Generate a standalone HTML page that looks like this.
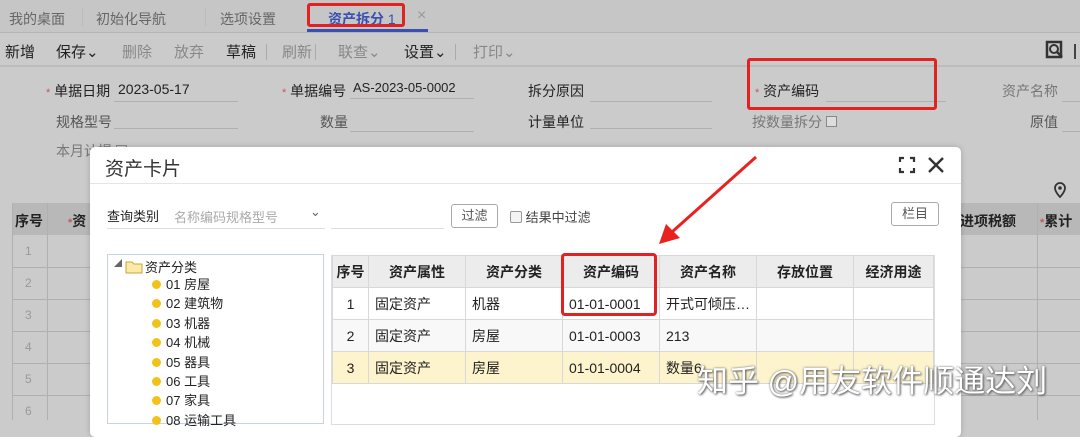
<!DOCTYPE html>
<html><head><meta charset="utf-8"><style>
*{margin:0;padding:0;box-sizing:border-box}
body{width:1080px;height:420px;overflow:hidden;background:#cbcbcb;font-family:"Liberation Sans","Noto Sans CJK SC",sans-serif;font-size:14px;color:#222;position:relative}
.a{position:absolute;white-space:nowrap}
.g{color:#888}
.ln{position:absolute;height:1px;background:#b0b0b0}
.req{color:#c55;font-size:11px}
table{border-collapse:collapse;position:absolute}
td{border:1px solid #d8d8d8;font-size:14px;padding-left:6px;height:32px}
.th td{background:#ececec;font-weight:bold;text-align:center;padding:0;height:32px}
</style></head><body>
<!-- tabs -->
<div class="a" style="left:0;top:0;width:1080px;height:33px;background:#c6c6c6;border-bottom:1px solid #b5b5b5"></div>
<div class="a g" style="left:9px;top:9px;color:#666">我的桌面</div>
<div class="a" style="left:82px;top:8px;width:1px;height:18px;background:#bbb"></div>
<div class="a" style="left:96px;top:9px;color:#666">初始化导航</div>
<div class="a" style="left:205px;top:8px;width:1px;height:18px;background:#bbb"></div>
<div class="a" style="left:220px;top:9px;color:#666">选项设置</div>
<div class="a" style="left:328px;top:9px;color:#3b4fb0;font-weight:bold">资产拆分 <span style="font-weight:normal">1</span></div>
<div class="a" style="left:417px;top:7px;color:#999;font-size:16px">×</div>
<div class="a" style="left:307px;top:29px;width:121px;height:3px;background:#3b4fb0"></div>
<div class="a" style="left:307px;top:3px;width:98px;height:24px;border:3px solid #e02222;border-radius:3px"></div>
<!-- toolbar -->
<div class="a" style="left:0;top:33px;width:1080px;height:34px;background:#cbcbcb;border-bottom:2px solid #bcbcbc"></div>
<div class="a" style="left:5px;top:41px;font-size:15px">新增</div>
<div class="a" style="left:56px;top:41px;font-size:15px">保存⌄</div>
<div class="a" style="left:122px;top:41px;font-size:15px;color:#888">删除</div>
<div class="a" style="left:174px;top:41px;font-size:15px;color:#888">放弃</div>
<div class="a" style="left:226px;top:41px;font-size:15px">草稿</div>
<div class="a" style="left:282px;top:41px;font-size:15px;color:#888">刷新</div>
<div class="a" style="left:338px;top:41px;font-size:15px;color:#888">联查⌄</div>
<div class="a" style="left:404px;top:41px;font-size:15px">设置⌄</div>
<div class="a" style="left:473px;top:41px;font-size:15px;color:#888">打印⌄</div>
<div class="a" style="left:266px;top:44px;width:1px;height:16px;background:#aaa"></div>
<div class="a" style="left:315px;top:44px;width:1px;height:16px;background:#aaa"></div>
<div class="a" style="left:455px;top:44px;width:1px;height:16px;background:#aaa"></div>
<svg class="a" style="left:1045px;top:40px" width="20" height="20"><rect x="2" y="2" width="14" height="15" fill="none" stroke="#333" stroke-width="2.5"/><circle cx="9" cy="9" r="4" fill="none" stroke="#333" stroke-width="2"/><line x1="12" y1="12" x2="17" y2="17" stroke="#333" stroke-width="2.5"/></svg>
<div class="a" style="left:1074px;top:44px;width:2px;height:15px;background:#444"></div>
<!-- form -->
<div class="a" style="left:46px;top:81px"><span class="req">*</span> 单据日期</div>
<div class="a" style="left:118px;top:81px">2023-05-17</div><div class="ln" style="left:114px;top:101px;width:124px"></div>
<div class="a" style="left:282px;top:81px"><span class="req">*</span> 单据编号</div>
<div class="a" style="left:353px;top:80px;font-size:13px">AS-2023-05-0002</div><div class="ln" style="left:350px;top:98px;width:124px"></div>
<div class="a" style="left:528px;top:81px">拆分原因</div><div class="ln" style="left:590px;top:101px;width:122px"></div>
<div class="a" style="left:755px;top:81px"><span class="req">*</span> 资产编码</div><div class="ln" style="left:826px;top:101px;width:120px"></div>
<div class="a" style="left:1002px;top:81px;color:#777">资产名称</div><div class="ln" style="left:1062px;top:101px;width:18px"></div>
<div class="a" style="left:56px;top:112px;color:#555">规格型号</div><div class="ln" style="left:114px;top:128px;width:124px"></div>
<div class="a" style="left:320px;top:112px;color:#555">数量</div><div class="ln" style="left:350px;top:131px;width:124px"></div>
<div class="a" style="left:528px;top:112px">计量单位</div><div class="ln" style="left:590px;top:128px;width:122px"></div>
<div class="a" style="left:752px;top:112px;color:#777">按数量拆分 <span style="display:inline-block;width:11px;height:11px;border:1px solid #888;background:#ddd"></span></div>
<div class="a" style="left:1030px;top:112px;color:#555">原值</div><div class="ln" style="left:1062px;top:131px;width:18px"></div>
<div class="a" style="left:56px;top:141px;color:#777">本月计提 <span style="display:inline-block;width:11px;height:11px;border:1px solid #888"></span></div>
<div class="a" style="left:747px;top:58px;width:190px;height:52px;border:3px solid #e02222;border-radius:3px"></div>
<svg class="a" style="left:1050px;top:180px" width="20" height="20"><path d="M10 3a5 5 0 0 0-5 5c0 4 5 9 5 9s5-5 5-9a5 5 0 0 0-5-5z" fill="none" stroke="#333" stroke-width="1.8"/><circle cx="10" cy="8" r="1.8" fill="#333"/></svg>
<!-- background grid -->
<div class="a" style="left:12px;top:203px;width:1068px;height:32px;background:#b8b8b8"></div>
<div class="a" style="left:15px;top:211px;font-weight:bold">序号</div>
<div class="a" style="left:68px;top:211px;font-weight:bold"><span class="req">*</span>资</div>
<div class="a" style="left:960px;top:211px;font-weight:bold">进项税额</div>
<div class="a" style="left:1040px;top:211px;font-weight:bold"><span class="req">*</span>累计</div>
<div class="a" style="left:47px;top:203px;width:1px;height:217px;background:#b0b0b0"></div>
<div class="a" style="left:1037px;top:203px;width:1px;height:217px;background:#b0b0b0"></div>
<div class="a" style="left:12px;top:203px;width:1px;height:217px;background:#b0b0b0"></div>
<div class="ln" style="left:12px;top:267px;width:1068px"></div>
<div class="ln" style="left:12px;top:299px;width:1068px"></div>
<div class="ln" style="left:12px;top:331px;width:1068px"></div>
<div class="ln" style="left:12px;top:363px;width:1068px"></div>
<div class="ln" style="left:12px;top:395px;width:1068px"></div>
<div class="a" style="left:25px;top:244px;color:#999;font-size:12px">1</div>
<div class="a" style="left:25px;top:276px;color:#999;font-size:12px">2</div>
<div class="a" style="left:25px;top:308px;color:#999;font-size:12px">3</div>
<div class="a" style="left:25px;top:340px;color:#999;font-size:12px">4</div>
<div class="a" style="left:25px;top:372px;color:#999;font-size:12px">5</div>
<div class="a" style="left:25px;top:404px;color:#999;font-size:12px">6</div>
<!-- modal -->
<div class="a" style="left:90px;top:147px;width:871px;height:290px;background:#fff;border-radius:5px;box-shadow:0 0 6px rgba(0,0,0,.2)"></div>
<div class="a" style="left:105px;top:154px;font-size:19px;color:#333">资产卡片</div>
<div class="ln" style="left:90px;top:183px;width:871px;background:#e5e5e5"></div>
<svg class="a" style="left:898px;top:156px" width="18" height="18"><path d="M2 6V2h4M12 2h4v4M16 12v4h-4M6 16H2v-4" fill="none" stroke="#333" stroke-width="2.2"/></svg>
<svg class="a" style="left:927px;top:156px" width="18" height="18"><path d="M2 2L16 16M16 2L2 16" stroke="#333" stroke-width="2.4"/></svg>
<div class="a" style="left:107px;top:206px;font-size:13px">查询类别</div>
<div class="a" style="left:174px;top:207px;font-size:13px;color:#aaa">名称编码规格型号</div>
<div class="a" style="left:310px;top:204px;font-size:13px;color:#666">⌄</div>
<div class="ln" style="left:107px;top:228px;width:218px;background:#ddd"></div>
<div class="ln" style="left:331px;top:228px;width:113px;background:#ddd"></div>
<div class="a" style="left:451px;top:204px;width:47px;height:24px;border:1px solid #aaa;border-radius:3px;font-size:13px;color:#555;text-align:center;line-height:22px">过滤</div>
<div class="a" style="left:510px;top:207px;font-size:13px;color:#444"><span style="display:inline-block;width:12px;height:12px;border:1px solid #999;border-radius:2px;background:#f4f4f4;vertical-align:-1px"></span> 结果中过滤</div>
<div class="a" style="left:891px;top:202px;width:48px;height:24px;border:1px solid #aaa;border-radius:3px;font-size:13px;color:#555;text-align:center;line-height:22px">栏目</div>
<!-- tree -->
<div class="a" style="left:107px;top:254px;width:217px;height:170px;border:1px solid #c8d4e0"></div>
<div class="a" style="left:114px;top:258px;font-size:8px;color:#666">◢</div>
<svg class="a" style="left:125px;top:260px" width="18" height="14"><path d="M1 2h6l2 2h8v9H1z" fill="#fbe9a6" stroke="#c9a53a"/></svg>
<div class="a" style="left:145px;top:257px;font-size:13px">资产分类</div>
<div class="a" style="left:152px;top:275px;font-size:13px;line-height:19.4px">
<div><span style="display:inline-block;width:9px;height:9px;border-radius:50%;background:#f2c21b;margin-right:5px"></span>01 房屋</div>
<div><span style="display:inline-block;width:9px;height:9px;border-radius:50%;background:#f2c21b;margin-right:5px"></span>02 建筑物</div>
<div><span style="display:inline-block;width:9px;height:9px;border-radius:50%;background:#f2c21b;margin-right:5px"></span>03 机器</div>
<div><span style="display:inline-block;width:9px;height:9px;border-radius:50%;background:#f2c21b;margin-right:5px"></span>04 机械</div>
<div><span style="display:inline-block;width:9px;height:9px;border-radius:50%;background:#f2c21b;margin-right:5px"></span>05 器具</div>
<div><span style="display:inline-block;width:9px;height:9px;border-radius:50%;background:#f2c21b;margin-right:5px"></span>06 工具</div>
<div><span style="display:inline-block;width:9px;height:9px;border-radius:50%;background:#f2c21b;margin-right:5px"></span>07 家具</div>
<div><span style="display:inline-block;width:9px;height:9px;border-radius:50%;background:#f2c21b;margin-right:5px"></span>08 运输工具</div>
</div>
<!-- table -->
<div class="a" style="left:331px;top:255px;width:604px;height:170px;border:1px solid #ddd"></div>
<table style="left:332px;top:255px;width:602px">
<tr class="th"><td style="width:36px">序号</td><td style="width:97px">资产属性</td><td style="width:97px">资产分类</td><td style="width:97px">资产编码</td><td style="width:97px">资产名称</td><td style="width:97px">存放位置</td><td>经济用途</td></tr>
<tr><td style="text-align:center;padding:0">1</td><td>固定资产</td><td>机器</td><td>01-01-0001</td><td>开式可倾压…</td><td></td><td></td></tr>
<tr style="background:#f8f8f8"><td style="text-align:center;padding:0">2</td><td>固定资产</td><td>房屋</td><td>01-01-0003</td><td>213</td><td></td><td></td></tr>
<tr style="background:#fdf3cc"><td style="text-align:center;padding:0">3</td><td>固定资产</td><td>房屋</td><td>01-01-0004</td><td>数量6</td><td></td><td></td></tr>
</table>
<div class="a" style="left:561px;top:253px;width:96px;height:63px;border:3px solid #e02222;border-radius:4px"></div>
<svg class="a" style="left:0;top:0" width="1080" height="420"><line x1="756" y1="157" x2="672" y2="232" stroke="#e8231f" stroke-width="3"/><path d="M659 244L666 224L680 238z" fill="#e8231f"/></svg>
<div class="a" style="left:697px;top:356px;font-size:31px;color:#fff;text-shadow:0 0 2px #777,1px 1px 2px #555">知乎 @用友软件顺通达刘</div>
</body></html>
